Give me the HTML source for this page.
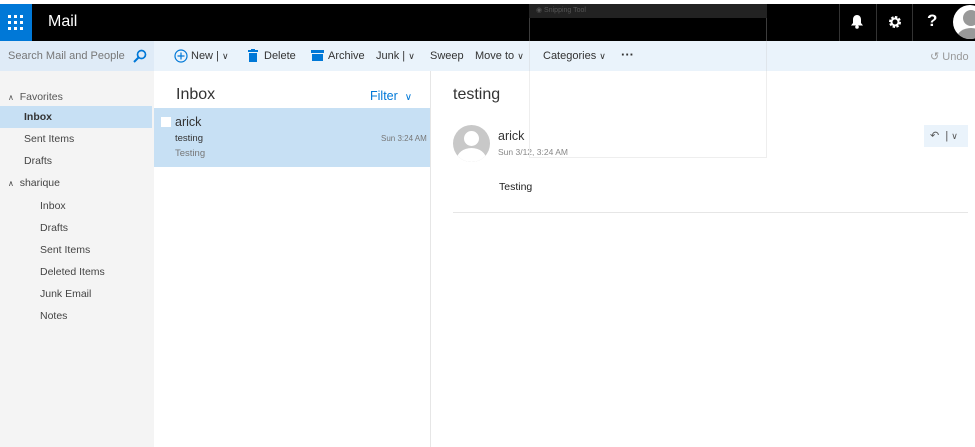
<!DOCTYPE html>
<html><head><meta charset="utf-8"><style>
*{margin:0;padding:0;box-sizing:border-box}
body{width:975px;height:447px;overflow:hidden;background:#fff;font-family:"Segoe UI","Liberation Sans",sans-serif;color:#333;position:relative}
.abs{position:absolute}
.t{position:absolute;white-space:nowrap}
</style></head><body>
<!-- header -->
<div class="abs" style="left:0;top:4px;width:975px;height:37px;background:#000"></div>
<div class="abs" style="left:0;top:4px;width:32px;height:37px;background:#0078d7"></div>
<svg class="abs" style="left:8px;top:15px" width="15" height="15" viewBox="0 0 15 15" fill="#fff">
<rect x="0" y="0" width="3" height="3"/><rect x="6" y="0" width="3" height="3"/><rect x="12" y="0" width="3" height="3"/>
<rect x="0" y="6" width="3" height="3"/><rect x="6" y="6" width="3" height="3"/><rect x="12" y="6" width="3" height="3"/>
<rect x="0" y="12" width="3" height="3"/><rect x="6" y="12" width="3" height="3"/><rect x="12" y="12" width="3" height="3"/></svg>
<div class="t" style="left:48px;top:13px;color:#fff;font-size:16px">Mail</div>
<div class="abs" style="left:839px;top:4px;width:1px;height:37px;background:#333"></div>
<div class="abs" style="left:876px;top:4px;width:1px;height:37px;background:#333"></div>
<div class="abs" style="left:912px;top:4px;width:1px;height:37px;background:#333"></div>
<svg class="abs" style="left:851px;top:15px" width="12" height="14" viewBox="0 0 12 14" fill="#fff"><path d="M6 0C3.5 0 2 2 2 4.5V8L0 10.5h12L10 8V4.5C10 2 8.5 0 6 0z"/><circle cx="6" cy="12" r="1.8"/></svg>
<svg class="abs" style="left:888px;top:15px" width="14" height="14" viewBox="0 0 14 14"><circle cx="7" cy="7" r="4.5" fill="none" stroke="#fff" stroke-width="3" stroke-dasharray="2.2 1.3"/><circle cx="7" cy="7" r="3.5" fill="none" stroke="#fff" stroke-width="2"/></svg>
<div class="t" style="left:927px;top:11px;color:#fff;font-size:17px;font-weight:bold">?</div>
<div class="abs" style="left:953px;top:4px;width:30px;height:37px;overflow:hidden">
<div class="abs" style="left:0;top:1px;width:34px;height:34px;border-radius:50%;background:#fff;overflow:hidden"><div class="abs" style="left:10px;top:5px;width:16px;height:16px;border-radius:50%;background:#999"></div><div class="abs" style="left:4px;top:23px;width:28px;height:20px;border-radius:50%;background:#999"></div></div></div>
<!-- toolbar -->
<div class="abs" style="left:0;top:41px;width:975px;height:30px;background:#eaf3fb"></div>
<div class="abs" style="left:0;top:41px;width:154px;height:30px;background:#dfebf7"></div>
<div class="t" style="left:8px;top:50px;font-size:11px;color:#777">Search Mail and People</div>
<svg class="abs" style="left:133px;top:49px" width="14" height="14" viewBox="0 0 14 14"><circle cx="8.5" cy="5.5" r="4" fill="none" stroke="#0078d7" stroke-width="1.7"/><path d="M5.5 8.5L1 13" stroke="#0078d7" stroke-width="2"/></svg>
<svg class="abs" style="left:174px;top:49px" width="14" height="14" viewBox="0 0 14 14"><circle cx="7" cy="7" r="6" fill="none" stroke="#0078d7" stroke-width="1.2"/><path d="M7 3.5v7M3.5 7h7" stroke="#0078d7" stroke-width="1.2"/></svg>
<div class="t" style="left:191px;top:50px;font-size:11px">New | <span style="font-size:9px">&#x2228;</span></div>
<svg class="abs" style="left:248px;top:49px" width="10" height="13" viewBox="0 0 10 13" fill="#0078d7"><rect x="0" y="1" width="10" height="2"/><rect x="3" y="0" width="4" height="1.5"/><path d="M1 4h8v9H1z"/></svg>
<div class="t" style="left:264px;top:50px;font-size:11px">Delete</div>
<svg class="abs" style="left:311px;top:50px" width="13" height="11" viewBox="0 0 13 11" fill="#0078d7"><rect x="0" y="0" width="13" height="3"/><rect x="1" y="4" width="11" height="7"/></svg>
<div class="t" style="left:328px;top:50px;font-size:11px">Archive</div>
<div class="t" style="left:376px;top:50px;font-size:11px">Junk | <span style="font-size:9px">&#x2228;</span></div>
<div class="t" style="left:430px;top:50px;font-size:11px">Sweep</div>
<div class="t" style="left:475px;top:50px;font-size:11px">Move to <span style="font-size:9px">&#x2228;</span></div>
<div class="t" style="left:543px;top:50px;font-size:11px">Categories <span style="font-size:9px">&#x2228;</span></div>
<div class="t" style="left:621px;top:47px;font-size:13px;font-weight:bold">&middot;&middot;&middot;</div>
<div class="t" style="left:930px;top:50px;font-size:11px;color:#999">&#x21BA; Undo</div>
<!-- left nav -->
<div class="abs" style="left:0;top:71px;width:154px;height:376px;background:#f4f4f4"></div>
<div class="abs" style="left:0;top:106px;width:152px;height:22px;background:#c7e0f4"></div>
<div class="t" style="left:8px;top:91px;font-size:10.5px;color:#555"><span style="font-size:8px">&#x2227;</span>&nbsp; Favorites</div>
<div class="t" style="left:24px;top:111px;font-size:10.5px;font-weight:bold">Inbox</div>
<div class="t" style="left:24px;top:133px;font-size:10.5px;color:#444">Sent Items</div>
<div class="t" style="left:24px;top:155px;font-size:10.5px;color:#444">Drafts</div>
<div class="t" style="left:8px;top:177px;font-size:10.5px;color:#444"><span style="font-size:8px">&#x2227;</span>&nbsp; sharique</div>
<div class="t" style="left:40px;top:200px;font-size:10.5px;color:#444">Inbox</div>
<div class="t" style="left:40px;top:222px;font-size:10.5px;color:#444">Drafts</div>
<div class="t" style="left:40px;top:244px;font-size:10.5px;color:#444">Sent Items</div>
<div class="t" style="left:40px;top:266px;font-size:10.5px;color:#444">Deleted Items</div>
<div class="t" style="left:40px;top:288px;font-size:10.5px;color:#444">Junk Email</div>
<div class="t" style="left:40px;top:310px;font-size:10.5px;color:#444">Notes</div>
<!-- list -->
<div class="abs" style="left:430px;top:71px;width:1px;height:376px;background:#e6e6e6"></div>
<div class="t" style="left:176px;top:86px;font-size:16px">Inbox</div>
<div class="t" style="left:370px;top:89px;font-size:12.5px;color:#0078d7">Filter &nbsp;<span style="font-size:10px">&#x2228;</span></div>
<div class="abs" style="left:154px;top:108px;width:276px;height:59px;background:#c7e0f4"></div>
<div class="abs" style="left:161px;top:117px;width:10px;height:10px;background:#fff"></div>
<div class="t" style="left:175px;top:115px;font-size:12.5px">arick</div>
<div class="t" style="left:175px;top:133px;font-size:9.5px">testing</div>
<div class="t" style="left:381px;top:134px;font-size:8px;color:#777">Sun 3:24 AM</div>
<div class="t" style="left:175px;top:148px;font-size:9.5px;color:#777">Testing</div>
<!-- reading -->
<div class="t" style="left:453px;top:86px;font-size:16px">testing</div>
<div class="abs" style="left:453px;top:125px;width:37px;height:37px;border-radius:50%;background:#c8c8c8;overflow:hidden"><div class="abs" style="left:11px;top:6px;width:15px;height:15px;border-radius:50%;background:#fff"></div><div class="abs" style="left:4px;top:23px;width:29px;height:22px;border-radius:50%;background:#fff"></div></div>
<div class="t" style="left:498px;top:129px;font-size:12.5px">arick</div>
<div class="t" style="left:498px;top:147px;font-size:8.5px;color:#888">Sun 3/12, 3:24 AM</div>
<div class="abs" style="left:924px;top:125px;width:44px;height:22px;background:#eaf3fb"></div>
<div class="t" style="left:930px;top:129px;font-size:11px;color:#555">&#x21B6; &nbsp;| <span style="font-size:9px">&#x2228;</span></div>
<div class="t" style="left:499px;top:181px;font-size:10.5px;color:#222">Testing</div>
<div class="abs" style="left:453px;top:212px;width:515px;height:1px;background:#e6e6e6"></div>
<!-- overlay -->
<div class="abs" style="left:529px;top:71px;width:238px;height:87px;border:1px solid #eee;border-top:none"></div>
<div class="abs" style="left:529px;top:4px;width:1px;height:67px;background:rgba(200,200,200,0.3)"></div>
<div class="abs" style="left:766px;top:4px;width:1px;height:67px;background:rgba(200,200,200,0.3)"></div>
<div class="abs" style="left:529px;top:4px;width:238px;height:14px;background:#222"></div>
<div class="t" style="left:536px;top:6px;font-size:7px;color:#555">&#9673; Snipping Tool</div>
</body></html>
